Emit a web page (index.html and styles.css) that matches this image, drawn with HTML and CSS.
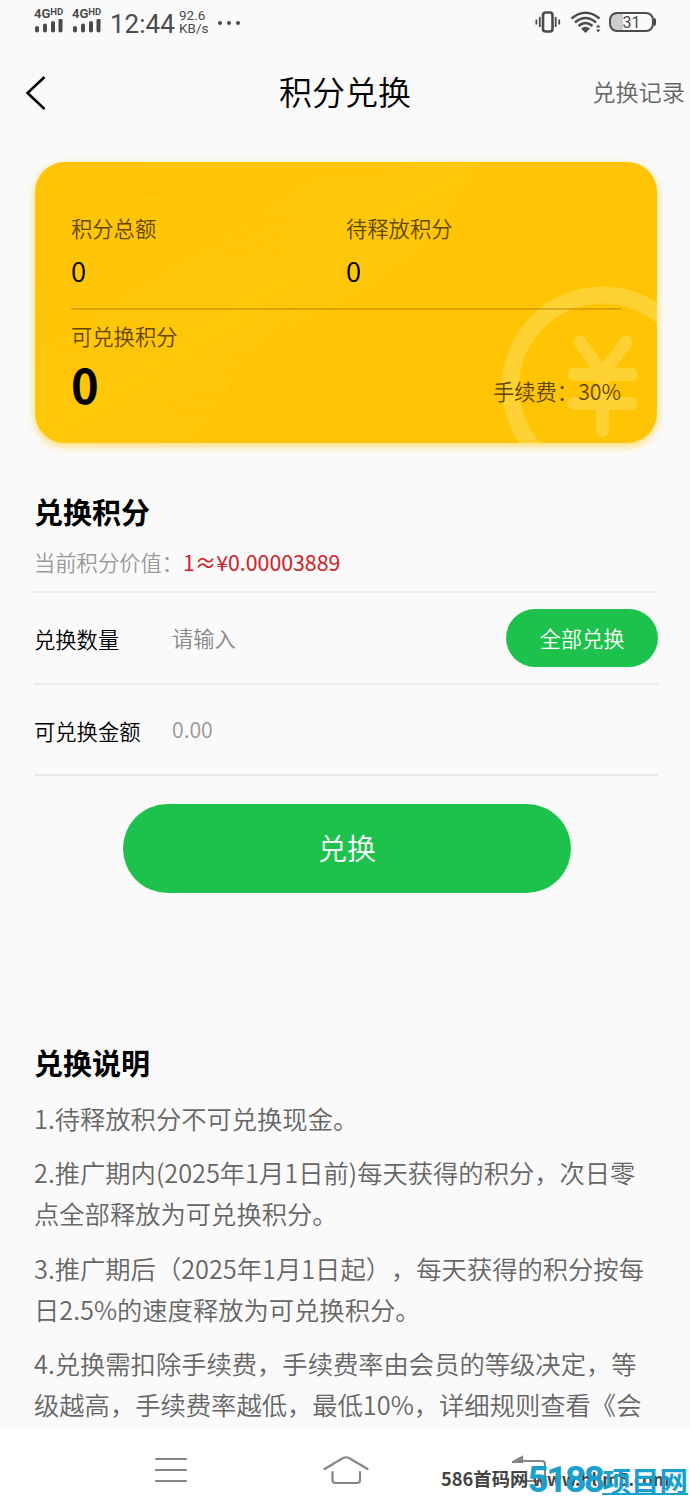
FILE: index.html
```
<!DOCTYPE html>
<html lang="zh-CN">

<head>
  <meta charset="UTF-8" />
  <meta name="viewport"
    content="width=device-width, initial-scale=1.0" />
  <title>积分兑换</title>
  <link rel="stylesheet" href="styles.css">
</head>

<body>

  <header class="status">
    <div class="sim">
      <span class="net">4G<small>HD</small></span>
      <svg width="29" height="14" viewBox="0 0 29 14">
        <path d="M3 9v2.500M11 6.500v5M19 4v7.500M26.500 1.500v10" />
      </svg>
    </div>
    <div class="sim">
      <span class="net">4G<small>HD</small></span>
      <svg width="29" height="14" viewBox="0 0 29 14">
        <path d="M3 9v2.500M11 6.500v5M19 4v7.500M26.500 1.500v10" />
      </svg>
    </div>
    <span class="clock">12:44</span>
    <span class="speed">92.6<br>KB/s</span>
    <span class="dots"><i></i><i></i><i></i></span>
    <svg class="vibrate" width="26" height="22" viewBox="0 0 26 22">
      <rect x="8" y="1.500" width="9.500" height="19" rx="2.500" stroke-width="2.600" />
      <path d="M4.800 6v10M1.400 8.500v5M20.700 6v10M24.200 8.500v5" stroke-width="1.800" />
    </svg>
    <svg class="wifi" width="32" height="23" viewBox="0 0 32 23">
      <path d="M1.500 7.500Q15.500-4 29.500 7.500M5 11.500Q15.500 2.500 26 11.500M8.500 15Q15.500 9 22.500 15" fill="none" stroke="#4b4b4b" stroke-width="2.400" />
      <path d="M11 17.500Q15.500 14 20 17.500L15.500 22zM26 16.500l2.200-3 2.200 3zM26 18.500l2.200 3 2.200-3z" fill="#4b4b4b" />
    </svg>
    <div class="battery"><span>31</span></div>
  </header>

  <nav class="navbar">
    <svg class="back" width="22" height="36" viewBox="0 0 22 36">
      <path d="M19.500 2L2.500 18 19.500 34" />
    </svg>
    <h1 class="title">积分兑换</h1>
    <a class="record">兑换记录</a>
  </nav>

  <main class="content">
    <section class="card">
      <svg class="card-bg" width="622" height="281" viewBox="0 0 622 281">
        <defs>
          <linearGradient id="shine" x1="0" y1="0" x2="1" y2="1">
            <stop offset="0" stop-color="#ffcc10" stop-opacity="0" />
            <stop offset=".5" stop-color="#ffcc10" stop-opacity=".4" />
            <stop offset="1" stop-color="#ffcc10" stop-opacity="0" />
          </linearGradient>
        </defs>
        <path d="M0 0H445Q390 110 280 155Q210 180 165 281H0z" fill="url(#shine)" />
        <g class="waves">
          <path d="M0 45Q130 30 200 20T440 10" />
          <path d="M20 75Q110 5 200 45T400 45" />
          <path d="M40 95Q120 15 210 60T370 75" />
          <path d="M60 110Q140 35 220 80T340 95" />
          <path d="M75 125Q150 60 230 100T320 115" />
          <path d="M20 170Q100 150 160 185T260 145" />
          <path d="M20 190Q100 175 150 205T240 165" />
          <path d="M20 215Q100 195 145 225T220 185" />
          <path d="M20 240Q100 220 140 245T200 215" />
        </g>
        <g class="coin">
          <circle cx="567.500" cy="225" r="92" stroke-width="17" />
          <path d="M545 180l22.500 32 23.500-32M539 212.500h57M539 241.500h57M567.500 212v56" stroke-width="13" />
        </g>
      </svg>
      <div class="totals">
        <div class="total">
          <p class="label">积分总额</p>
          <p class="value">0</p>
        </div>
        <div class="total">
          <p class="label">待释放积分</p>
          <p class="value">0</p>
        </div>
      </div>
      <div class="available">
        <div>
          <p class="label">可兑换积分</p>
          <p class="big">0</p>
        </div>
        <p class="label">手续费：30%</p>
      </div>
    </section>

    <section class="exchange">
      <h2 class="heading">兑换积分</h2>
      <p class="price">当前积分价值：<span>1≈¥0.00003889</span></p>
      <div class="row">
        <label for="amount">兑换数量</label>
        <input type="text"
          class="input"
          id="amount"
          placeholder="请输入">
        <button class="all">全部兑换</button>
      </div>
      <div class="row">
        <label>可兑换金额</label>
        <span class="money">0.00</span>
      </div>
      <button class="submit">兑换</button>
    </section>

    <section class="notes">
      <h2 class="heading">兑换说明</h2>
      <p>1.待释放积分不可兑换现金。</p>
      <p>2.推广期内(2025年1月1日前)每天获得的积分，次日零<br>点全部释放为可兑换积分。</p>
      <p>3.推广期后（2025年1月1日起），每天获得的积分按每<br>日2.5%的速度释放为可兑换积分。</p>
      <p>4.兑换需扣除手续费，手续费率由会员的等级决定，等<br>级越高，手续费率越低，最低10%，详细规则查看《会</p>
    </section>
  </main>

  <footer class="keys">
    <svg width="34" height="28" viewBox="0 0 34 28">
      <path d="M2 3H32M2 14H32M2 25H32" />
    </svg>
    <svg width="46" height="30" viewBox="0 0 46 30">
      <path d="M1.500 14L20 3Q23 1.500 26 3L44.500 14M9.500 17v8q0 3 3 3h21.500q3 0 3-3v-8" />
    </svg>
    <svg width="34" height="30" viewBox="0 0 34 30">
      <path d="M8 6h22q3 0 3 3v14q0 3-3 3H9" />
      <path d="M1 7l9-5v5z" class="tip" />
    </svg>
    <div class="site">586首码网 <span>www.hljm5.com</span></div>
    <div class="brand"><b>5188</b><span>项目网</span></div>
  </footer>

</body>

</html>
```
FILE: styles.css
```
body {
  width: 690px;
  height: 1496px;
  margin: 0;
  display: flex;
  flex-direction: column;
  overflow: hidden;
  background-color: #fafafa;
  color: #000;
  font-family: "Noto Sans CJK SC", sans-serif;
  font-weight: 350;
  text-spacing-trim: space-all;
}

h1,
h2,
p {
  margin: 0;
  font-weight: inherit;
}

button {
  border: none;
  padding: 0;
  color: white;
  background-color: #1cc24b;
  font-family: inherit;
  font-weight: inherit;
}

svg {
  display: block;
  flex: none;
}

.status {
  height: 44px;
  display: flex;
  align-items: center;
  padding: 0 33px 0 34px;
  box-sizing: border-box;
  color: #4b4b4b;
  font-family: Roboto, sans-serif;
  font-weight: 400;
}

.sim {
  width: 30px;
  margin-right: 8px;
  padding-bottom: 3px;
}

.sim svg {
  fill: none;
  stroke: #4b4b4b;
  stroke-width: 4;
  stroke-linecap: round;
}

.net {
  display: flex;
  align-items: flex-start;
  height: 11px;
  font-size: 13px;
  font-weight: 700;
  line-height: 11px;
}

.net small {
  font-size: 9.5px;
  line-height: 8px;
}

.clock {
  width: 69px;
  font-size: 26px;
  line-height: 30px;
  padding-top: 3px;
}

.speed {
  width: 39px;
  font-size: 13.5px;
  line-height: 13px;
}

.dots {
  display: flex;
  gap: 5px;
  padding-top: 1px;
}

.dots i {
  width: 4px;
  height: 4px;
  border-radius: 50%;
  background-color: #4b4b4b;
}

.vibrate {
  margin-left: auto;
  fill: none;
  stroke: #4b4b4b;
}

.wifi {
  margin: 0 7px 0 9px;
}

.battery {
  position: relative;
  width: 41px;
  height: 16px;
  margin-right: 3px;
  border: 2px solid #4b4b4b;
  border-radius: 8px;
  background: linear-gradient(90deg, #ccc 30%, transparent 30%);
  font-size: 16px;
  line-height: 17px;
  text-align: center;
}

.battery::after {
  content: "";
  position: absolute;
  right: -4px;
  top: 4px;
  width: 2px;
  height: 8px;
  border-radius: 0 2px 2px 0;
  background-color: #4b4b4b;
}

.navbar {
  height: 98px;
  display: grid;
  grid-template-columns: 1fr auto 1fr;
  align-items: center;
  padding: 0 5px 0 25px;
}

.back {
  fill: none;
  stroke: #000;
  stroke-width: 2.5;
}

.title {
  font-size: 33px;
  margin-left: -20px;
  padding-bottom: 4px;
}

.record {
  justify-self: end;
  padding-bottom: 4px;
  color: #666;
  font-size: 23.2px;
}

.content {
  height: 1287px;
  padding: 20px 32px 0 34px;
  box-sizing: border-box;
  overflow: hidden;
}

.card {
  position: relative;
  height: 281px;
  margin: 0 1px;
  padding: 0 36px;
  border-radius: 30px;
  background-color: #ffc404;
  box-shadow: 0 3px 8px rgba(255, 196, 4, .6);
}

.card-bg {
  position: absolute;
  left: 0;
  top: 0;
  border-radius: 30px;
}

.waves {
  fill: none;
  stroke: #f8b800;
  stroke-opacity: .12;
  stroke-width: 2;
}

.coin {
  fill: none;
  stroke: #ffd233;
  stroke-linecap: round;
}

.totals,
.available {
  position: relative;
}

.totals {
  display: grid;
  grid-template-columns: 1fr 1fr;
  height: 148px;
  padding-top: 50px;
  box-sizing: border-box;
  border-bottom: 2px solid rgba(150, 100, 0, .35);
}

.label {
  color: #604600;
  font-size: 21.3px;
  line-height: 32px;
}

.value {
  font-size: 27.5px;
  line-height: 52px;
}

.available {
  display: flex;
  justify-content: space-between;
  align-items: flex-end;
  padding-top: 10px;
}

.available > .label {
  padding-bottom: 8px;
}

.big {
  font-size: 47px;
  font-weight: 700;
  line-height: 63px;
}

.exchange {
  height: 606px;
}

.heading {
  font-size: 29px;
  font-weight: 700;
  line-height: 42px;
}

.exchange .heading {
  padding-top: 47px;
}

.price {
  height: 61px;
  box-sizing: border-box;
  padding-top: 14px;
  border-bottom: 2px solid #ebebeb;
  color: #999;
  font-size: 21.3px;
  line-height: 32px;
}

.price span {
  color: #d02028;
  font-weight: 400;
}

.row {
  display: flex;
  align-items: center;
  height: 91.5px;
  box-sizing: border-box;
  border-bottom: 2px solid #ebebeb;
  font-size: 21.3px;
}

.row label {
  width: 138px;
  padding-top: 2px;
}

.input {
  flex: 1;
  min-width: 0;
  padding: 0;
  border: none;
  background: none;
  font: inherit;
}

.input::placeholder {
  color: #888;
}

.all {
  width: 152px;
  height: 58px;
  padding-bottom: 1px;
  border-radius: 29px;
  font-size: 21.3px;
}

.money {
  padding-bottom: 2px;
  color: #999;
}

.submit {
  display: block;
  width: 448px;
  height: 89px;
  margin: 28px 0 0 89px;
  padding-bottom: 3px;
  border-radius: 45px;
  font-size: 29px;
}

.notes .heading {
  margin-bottom: 15px;
}

.notes {
  margin-top: -8px;
}

.notes p {
  margin-bottom: 13.3px;
  color: #666;
  font-size: 25.3px;
  line-height: 41px;
  white-space: nowrap;
}

.keys {
  position: relative;
  flex: 1;
  display: grid;
  grid-template-columns: 175px 175px 191px;
  justify-items: center;
  align-items: center;
  padding: 14px 0 0 83.5px;
  background-color: #fff;
}

.keys svg {
  fill: none;
  stroke: #858585;
  stroke-width: 2.2;
  stroke-linecap: round;
}

.keys .tip {
  fill: #858585;
}

/* site marks lie over the right key */
.site,
.brand {
  position: absolute;
  white-space: nowrap;
}

.site {
  left: 441px;
  bottom: 4px;
  color: #444;
  font-size: 18.3px;
  font-weight: 700;
  line-height: 26px;
}

.site span {
  font-size: 17px;
}

.brand {
  right: 2px;
  bottom: 1px;
  display: flex;
  align-items: flex-end;
  color: #1aa0cc;
  font-weight: 700;
}

.brand b {
  font-family: Roboto, sans-serif;
  font-size: 37px;
  font-weight: 700;
  line-height: 30px;
  letter-spacing: -2.5px;
}

.brand span {
  font-size: 28.5px;
  line-height: 27px;
  border-bottom: 2px solid #1aa0cc;
}
```
